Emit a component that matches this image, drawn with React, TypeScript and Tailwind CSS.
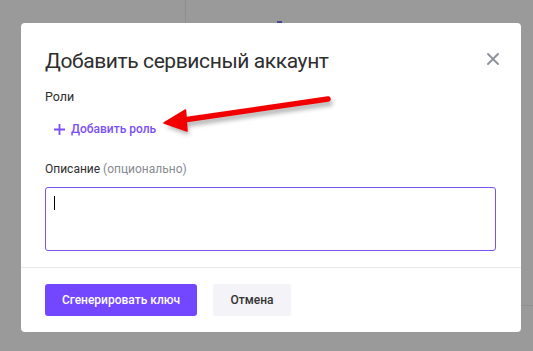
import React from "react";

export default function App() {
  return (
    <div
      className="relative w-[533px] h-[351px] overflow-hidden bg-[#9a9a9a]"
      style={{ fontFamily: "Roboto, 'Noto Sans', sans-serif" }}
    >
      {/* background page hints */}
      <div className="absolute left-[185px] top-0 w-px h-[23px] bg-[#8e8e8e]" />
      <div className="absolute left-[277px] top-[21px] w-[5px] h-[2px] bg-[#4a4a8a]" />
      <div className="absolute left-[521px] top-[305px] w-[12px] h-px bg-[#909090]" />

      <div className="pl-[21px] pt-[23px]">
        <div className="w-[500px] h-[309px] bg-white rounded-[4px] flex flex-col">
          <div className="pl-[24px] pr-[25px] pt-[26px] flex-1">
            <div className="flex items-start justify-between">
              <h2 className="text-[21px] leading-[24px] tracking-[-0.4px] text-[#2e2e2e] font-normal">
                Добавить сервисный аккаунт
              </h2>
              <svg width="12" height="12" viewBox="0 0 12 12" className="mt-[4px] mr-[-3px]">
                <path d="M1 1 L11 11 M11 1 L1 11" stroke="#8d929c" strokeWidth="1.9" strokeLinecap="round" />
              </svg>
            </div>
            <div className="mt-[16px] text-[12.5px] leading-[16px] text-[#2e2e2e]">Роли</div>
            <div className="mt-[16px] flex items-center gap-[6px] pl-[9px] text-[12px] leading-[16px] font-medium text-[#7b4ff6]">
              <svg width="11" height="11" viewBox="0 0 11 11">
                <path d="M5.5 0 V11 M0 5.5 H11" stroke="#7b4ff6" strokeWidth="1.8" />
              </svg>
              <span>Добавить роль</span>
            </div>
            <div className="mt-[24px] text-[12px] leading-[16px] text-[#2e2e2e]">
              Описание <span className="text-[#888b91]">(опционально)</span>
            </div>
            <div className="mt-[10px] w-[451px] h-[64px] border border-[#7a52f4] rounded-[3px] relative">
              <div className="absolute left-[8px] top-[8px] w-px h-[14px] bg-black" />
            </div>
          </div>
          <div className="border-t border-[#e8e8ea] h-[65px] pl-[24px] flex items-center gap-[16px]">
            <button className="h-[32px] w-[152px] rounded-[3px] bg-[#7346ff] text-white text-[12px] font-medium">
              Сгенерировать ключ
            </button>
            <button className="h-[32px] w-[78px] rounded-[3px] bg-[#f3f3f8] text-[#333333] text-[12px] font-medium">
              Отмена
            </button>
          </div>
        </div>
      </div>

      {/* red annotation arrow */}
      <svg className="absolute left-0 top-0 pointer-events-none" width="533" height="351">
        <defs>
          <filter id="sh" x="-20%" y="-50%" width="140%" height="200%">
            <feGaussianBlur stdDeviation="2" />
          </filter>
        </defs>
        <g transform="translate(2,4)" opacity="0.35" filter="url(#sh)">
          <path d="M328 99 L182 120" stroke="#333" strokeWidth="6" strokeLinecap="round" />
          <path d="M164 123 L185.5 110 L187 131 Z" fill="#333" />
        </g>
        <path d="M328 99 L180 120.5" stroke="#f20000" strokeWidth="5.5" strokeLinecap="round" />
        <path d="M164 123 L185.5 110 L187 131 Z" fill="#f20000" stroke="#f20000" strokeWidth="1.5" strokeLinejoin="round" />
      </svg>
    </div>
  );
}
